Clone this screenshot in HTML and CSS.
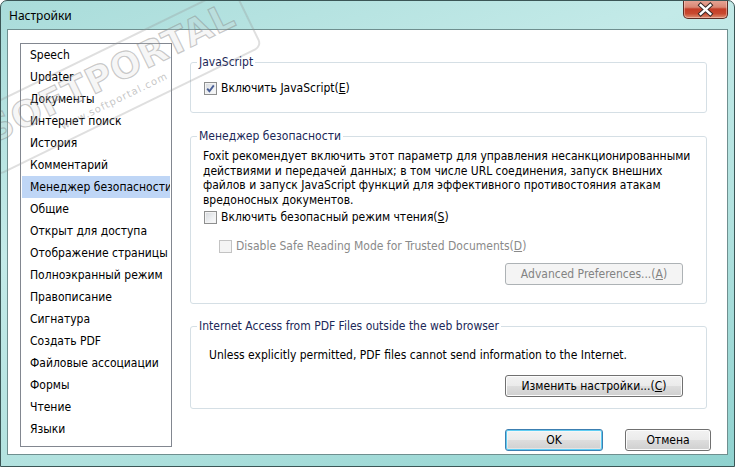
FILE: index.html
```html
<!DOCTYPE html>
<html lang="ru">
<head>
<meta charset="utf-8">
<title>Настройки</title>
<link rel="stylesheet" href="styles.css">
</head>
<body>
<div class="window">
  <div class="titlebar">
    <span class="title">Настройки</span>
    <div class="close">
      <svg width="45" height="19" viewBox="0 0 45 19">
        <path d="M17.5 5 L27.5 14 M27.5 5 L17.5 14" stroke="#3a2a28" stroke-width="4.6" stroke-linecap="square"/>
        <path d="M17.5 5 L27.5 14 M27.5 5 L17.5 14" stroke="#ffffff" stroke-width="2.6" stroke-linecap="square"/>
      </svg>
    </div>
  </div>
  <div class="client">
    <ul class="list">
      <li>Speech</li>
      <li>Updater</li>
      <li>Документы</li>
      <li>Интернет поиск</li>
      <li>История</li>
      <li>Комментарий</li>
      <li class="selected">Менеджер безопасности</li>
      <li>Общие</li>
      <li>Открыт для доступа</li>
      <li>Отображение страницы</li>
      <li>Полноэкранный режим</li>
      <li>Правописание</li>
      <li>Сигнатура</li>
      <li>Создать PDF</li>
      <li>Файловые ассоциации</li>
      <li>Формы</li>
      <li>Чтение</li>
      <li>Языки</li>
    </ul>
    <div class="main">
      <fieldset class="group group-js">
        <legend>JavaScript</legend>
        <div class="gbody">
          <div class="check-row">
            <span class="cb checked"><svg width="11" height="11" viewBox="0 0 11 11"><path d="M2.2 5.6 L4.4 8.2 L8.8 2.4" fill="none" stroke="#4a5f96" stroke-width="1.9"/></svg></span>
            <span>Включить JavaScript(<u>E</u>)</span>
          </div>
        </div>
      </fieldset>
      <fieldset class="group group-sec">
        <legend>Менеджер безопасности</legend>
        <div class="gbody">
          <p class="desc">Foxit рекомендует включить этот параметр для управления несанкционированными<br>действиями и передачей данных; в том числе URL соединения, запуск внешних<br>файлов и запуск JavaScript функций для эффективного противостояния атакам<br>вредоносных документов.</p>
          <div class="check-row row-safe">
            <span class="cb"></span>
            <span>Включить безопасный режим чтения(<u>S</u>)</span>
          </div>
          <div class="check-row row-trusted disabled">
            <span class="cb"></span>
            <span>Disable Safe Reading Mode for Trusted Documents(<u>D</u>)</span>
          </div>
          <div class="btn-line">
            <button class="btn wide" disabled>Advanced Preferences...(<u>A</u>)</button>
          </div>
        </div>
      </fieldset>
      <fieldset class="group group-net">
        <legend>Internet Access from PDF Files outside the web browser</legend>
        <div class="gbody">
          <p class="net-text">Unless explicitly permitted, PDF files cannot send information to the Internet.</p>
          <div class="btn-line">
            <button class="btn wide">Изменить настройки...(<u>C</u>)</button>
          </div>
        </div>
      </fieldset>
      <div class="actions">
        <button class="btn ok">OK</button>
        <button class="btn cancel">Отмена</button>
      </div>
    </div>
  </div>
  <div class="stamp">
    <div class="stamp-frame">
      <span class="stamp-big">SOFTPORTAL</span><span class="stamp-tm">™</span>
      <span class="stamp-url">www.softportal.com</span>
    </div>
  </div>
</div>
</body>
</html>
```

FILE: styles.css
```css
* { box-sizing: border-box; }

html, body {
  margin: 0;
  padding: 0;
  width: 735px;
  height: 467px;
  overflow: hidden;
  background: #ffffff;
}

body {
  font-family: "DejaVu Sans Condensed", "DejaVu Sans", sans-serif;
  font-size: 12px;
  color: #000;
}

.window {
  position: relative;
  width: 735px;
  height: 467px;
  border: 1px solid #3b5656;
  border-radius: 7px 7px 0 0;
  background: linear-gradient(160deg, #a9dcda 0%, #c3eae8 35%, #b2e2df 65%, #8fd2cf 100%);
  padding: 0 6px 11px 6px;
  display: flex;
  flex-direction: column;
  overflow: hidden;
}

.titlebar {
  height: 28px;
  display: flex;
  align-items: flex-start;
  flex-shrink: 0;
}

.title {
  font-family: "Noto Sans", "Open Sans", sans-serif;
  font-size: 12px;
  line-height: 14px;
  color: #000;
  margin: 8px 0 0 2px;
}

.close {
  margin-left: auto;
  width: 45px;
  height: 19px;
  margin-top: -1px;
  border: 1px solid #5b2c24;
  border-top: none;
  border-radius: 0 0 5px 5px;
  background: linear-gradient(to bottom, #e8a798 0%, #d98774 40%, #c43d27 50%, #c8492f 75%, #dd8f72 100%);
  box-shadow: inset 0 0 0 1px rgba(255, 220, 210, 0.45);
  display: flex;
}

.close svg { display: block; }

.client {
  flex: 1;
  background: #ffffff;
  border: 1px solid #6f8f8f;
  display: flex;
  align-items: flex-start;
  gap: 18px;
  padding: 13px 16px 0 12px;
}

.list {
  list-style: none;
  margin: 0;
  padding: 0;
  width: 152px;
  height: 404px;
  border: 1px solid #828790;
  overflow: hidden;
  flex-shrink: 0;
}

.list li {
  height: 22px;
  line-height: 22px;
  margin: 0 1px;
  padding-left: 8px;
  white-space: nowrap;
  overflow: hidden;
}

.list li.selected {
  background: #bfd6f6;
}

.main {
  width: 521px;
  margin-top: 12px;
  display: flex;
  flex-direction: column;
}

.group {
  margin: 0 4px 0 0;
  padding-left: 0;
  padding-right: 0;
  border: 1px solid #d5dfe5;
  border-radius: 3px;
  min-width: 0;
}

.group legend {
  padding: 0 2px;
  margin-left: 6px;
  line-height: 14px;
  color: #1b2858;
}

.group-js {
  padding-top: 12px;
  padding-bottom: 17px;
}
.group-js .gbody { padding-left: 13px; }

.group-sec {
  margin-top: 16px;
  padding-top: 6px;
  padding-bottom: 18px;
}
.group-sec .gbody { padding: 0 23px 0 12px; }

.group-net {
  margin-top: 15px;
  padding-top: 15px;
  padding-bottom: 11px;
}
.group-net .gbody { padding: 0 23px 0 18px; }

.check-row {
  display: flex;
  align-items: center;
  gap: 4px;
  line-height: 14px;
  white-space: nowrap;
}

.group-sec .row-safe {
  margin-top: 3px;
  margin-left: 1px;
}

.group-sec .row-trusted {
  margin-top: 15px;
  margin-left: 16px;
}

.cb {
  width: 13px;
  height: 13px;
  border: 1px solid #8e8f8f;
  background: linear-gradient(135deg, #d5d8dc 0%, #eef0f2 60%, #fbfbfb 100%);
  box-shadow: inset 0 0 0 1px #f3f3f3;
  display: flex;
  align-items: center;
  justify-content: center;
  flex-shrink: 0;
}

.cb svg { display: block; }

.disabled { color: #8a8a8a; }

.disabled .cb {
  border-color: #c3c3c3;
  background: #f4f4f4;
  box-shadow: none;
}

.desc {
  margin: 0;
  line-height: 14.5px;
  white-space: nowrap;
}

.net-text {
  margin: 0;
  line-height: 14px;
  white-space: nowrap;
}

.btn-line {
  display: flex;
  justify-content: flex-end;
}

.group-sec .btn-line { margin-top: 10px; }
.group-net .btn-line { margin-top: 13px; }

.btn {
  font-family: inherit;
  font-size: 12px;
  color: #000;
  height: 22px;
  padding: 0;
  border: 1px solid #707070;
  border-radius: 3px;
  background: linear-gradient(to bottom, #f2f2f2 0%, #ebebeb 48%, #dddddd 52%, #cfcfcf 100%);
  box-shadow: inset 0 0 0 1px #fcfcfc;
  line-height: 20px;
  text-align: center;
}

.btn.wide { width: 178px; }

.btn:disabled {
  color: #838383;
  border-color: #adb2b5;
  background: #f4f4f4;
  box-shadow: none;
}

.actions {
  display: flex;
  justify-content: flex-end;
  gap: 22px;
  margin-top: 20px;
}

.btn.ok {
  width: 98px;
  border-color: #3c7fb1;
  box-shadow: inset 0 0 0 1px #5fcdf3, inset 0 0 0 2px rgba(255, 255, 255, 0.4);
}

.btn.cancel { width: 86px; }

/* watermark overlay */
.stamp {
  position: absolute;
  left: -34px;
  top: 46px;
  width: 296px;
  transform: rotate(-26deg);
  transform-origin: center;
  pointer-events: none;
}

.stamp-frame {
  position: relative;
  border: 2px solid rgba(150, 150, 150, 0.3);
  border-radius: 8px;
  padding: 4px 8px 0 10px;
  height: 68px;
  text-align: left;
}

.stamp-big {
  display: block;
  font-family: "DejaVu Sans", sans-serif;
  font-weight: bold;
  font-size: 36px;
  line-height: 38px;
  letter-spacing: 1px;
  color: rgba(215, 215, 215, 0.22);
  -webkit-text-stroke: 1.2px rgba(130, 130, 130, 0.42);
}

.stamp-tm {
  position: absolute;
  right: 4px;
  top: 0;
  font-size: 10px;
  color: rgba(140, 140, 140, 0.5);
}

.stamp-url {
  display: block;
  font-family: "DejaVu Sans", sans-serif;
  font-size: 10px;
  line-height: 12px;
  margin-left: 68px;
  margin-top: 2px;
  letter-spacing: 1px;
  color: rgba(140, 140, 140, 0.5);
}
```
